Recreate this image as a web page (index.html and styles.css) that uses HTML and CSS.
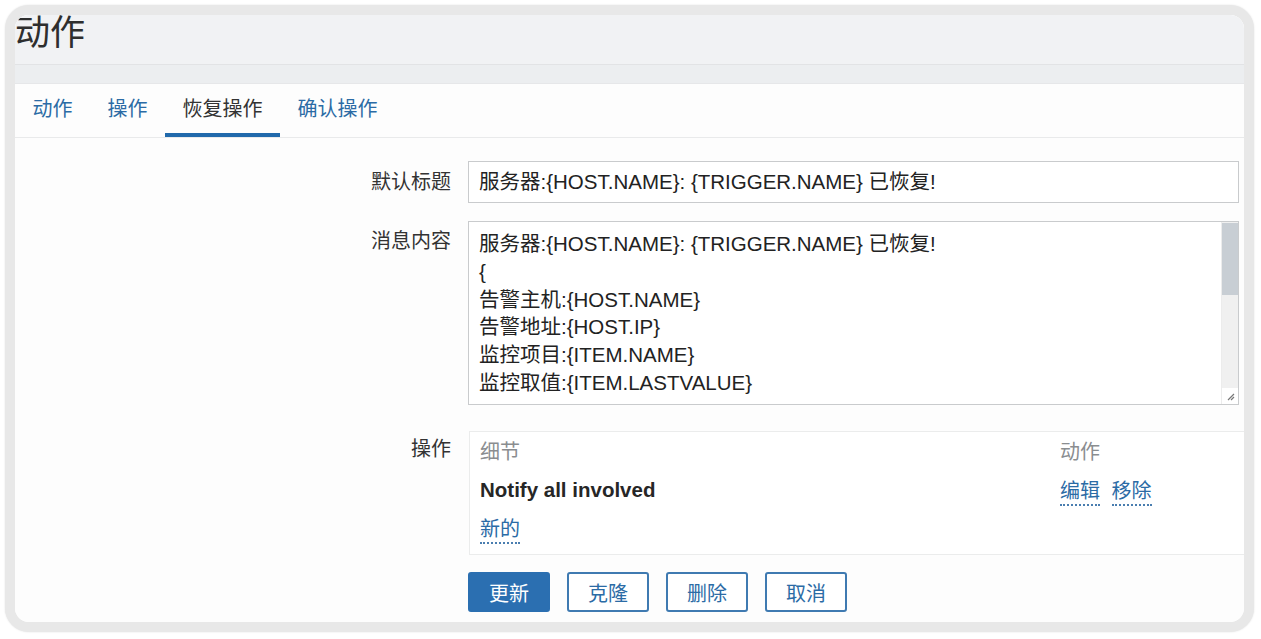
FILE: index.html
```html
<!DOCTYPE html>
<html lang="zh-CN">
<head>
	<meta charset="UTF-8">
	<title>动作</title>
	<link rel="stylesheet" href="styles.css">
</head>
<body>
	<div class="frame">
		<div class="page">
			<div class="header">
				<h1>动作</h1>
			</div>
			<div class="band"></div>

			<ul class="tabs">
				<li><a href="#">动作</a></li>
				<li><a href="#">操作</a></li>
				<li class="active"><a href="#">恢复操作</a></li>
				<li><a href="#">确认操作</a></li>
			</ul>

			<div class="form">
				<div class="label label-mid">默认标题</div>
				<div class="input">服务器:{HOST.NAME}: {TRIGGER.NAME} 已恢复!</div>

				<div class="label label-top">消息内容</div>
				<div class="textarea">
					<div class="lines">
						<div>服务器:{HOST.NAME}: {TRIGGER.NAME} 已恢复!</div>
						<div>{</div>
						<div>告警主机:{HOST.NAME}</div>
						<div>告警地址:{HOST.IP}</div>
						<div>监控项目:{ITEM.NAME}</div>
						<div>监控取值:{ITEM.LASTVALUE}</div>
					</div>
					<div class="scrollbar">
						<div class="thumb"></div>
						<div class="grip">
							<svg width="10" height="10" viewBox="0 0 10 10">
								<path d="M9 3 L3 9 M9 6 L6 9" stroke="#777" stroke-width="1.2" fill="none"/>
							</svg>
						</div>
					</div>
				</div>

				<div class="label label-ops">操作</div>
				<div class="ops">
					<div class="ops-row ops-head">
						<span class="col-detail">细节</span>
						<span class="col-action">动作</span>
					</div>
					<div class="ops-row">
						<span class="col-detail bold">Notify all involved</span>
						<span class="col-action">
							<a href="#" class="link">编辑</a>
							<a href="#" class="link">移除</a>
						</span>
					</div>
					<div class="ops-row">
						<span class="col-detail"><a href="#" class="link">新的</a></span>
					</div>
				</div>

				<div></div>
				<div class="buttons">
					<button class="btn primary">更新</button>
					<button class="btn">克隆</button>
					<button class="btn">删除</button>
					<button class="btn">取消</button>
				</div>
			</div>
		</div>
	</div>
</body>
</html>
```

FILE: styles.css
```css
*{
	margin:0;
	padding:0;
	box-sizing:border-box;
}
body{
	background:#fff;
	font-family:"Liberation Sans","Noto Sans CJK SC",sans-serif;
	color:#333;
}
.frame{
	margin:5px;
	width:1249px;
	height:627px;
	border:10px solid #e8e8e8;
	border-radius:24px;
	box-shadow:0 0 2px #e0e0e0;
	overflow:hidden;
	background:#fdfdfd;
}
.page{
	height:100%;
	background:#fdfdfd;
}
.header{
	height:50px;
	background:#f1f2f4;
	border-bottom:1px solid #e2e3e5;
}
h1{
	font-size:35px;
	font-weight:normal;
	line-height:36px;
	color:#2e2e2e;
}
.band{
	height:19px;
	background:#eceef0;
	border-bottom:1px solid #e6e7e9;
}
.tabs{
	list-style:none;
	display:flex;
	height:54px;
	border-bottom:1px solid #e9eaeb;
	background:#fdfdfd;
}
.tabs li{
	padding:0 17.5px;
	border-bottom:4px solid transparent;
}
.tabs li a{
	display:block;
	line-height:51px;
	font-size:20px;
	color:#2b6ba5;
	text-decoration:none;
}
.tabs li.active{
	border-bottom-color:#2169ab;
}
.tabs li.active a{
	color:#333;
}
.form{
	display:grid;
	grid-template-columns:436px 1fr;
	column-gap:17px;
	padding-top:23px;
}
.label{
	text-align:right;
	font-size:20px;
	color:#333;
}
.label-mid{
	line-height:42px;
}
.label-top{
	margin-top:18px;
	padding-top:6px;
	line-height:28px;
}
.label-ops{
	margin-top:26px;
	padding-top:4px;
	line-height:28px;
}
.input{
	width:771px;
	height:42px;
	border:1px solid #c9cbcd;
	background:#fff;
	padding-left:10px;
	line-height:40px;
	font-size:20.5px;
	color:#222;
}
.textarea{
	margin-top:18px;
	width:771px;
	height:184px;
	border:1px solid #c9cbcd;
	background:#fff;
	display:flex;
}
.lines{
	flex:1;
	overflow:hidden;
	padding:8px 0 0 10px;
	font-size:20.5px;
	line-height:27.8px;
	color:#222;
}
.scrollbar{
	width:17px;
	background:#f0f0f0;
	border-left:1px solid #ececec;
	display:flex;
	flex-direction:column;
	padding-top:1px;
}
.thumb{
	height:72px;
	background:#c8ced4;
}
.grip{
	margin-top:auto;
	height:16px;
	background:#fff;
	display:flex;
	align-items:center;
	justify-content:center;
}
.ops{
	margin-top:26px;
	margin-left:1px;
	height:124px;
	border:1px solid #ebecec;
	border-right:none;
	background:#fff;
	padding:1px 0 0 10px;
}
.ops-row{
	display:flex;
	height:38px;
	line-height:38px;
	font-size:20px;
}
.ops-head{
	color:#8a8d90;
}
.col-detail{
	width:580px;
}
.col-action .link{
	margin-right:6px;
}
.bold{
	font-weight:bold;
	font-size:20.5px;
	color:#262626;
}
.link{
	color:#2b6ba5;
	text-decoration:none;
	border-bottom:2px dotted #4a7eb0;
	line-height:26px;
	display:inline-block;
	vertical-align:middle;
}
.buttons{
	display:flex;
	gap:17px;
	margin-top:17px;
}
.btn{
	width:82px;
	height:40px;
	border:2px solid #3f7ab1;
	border-radius:3px;
	background:#fff;
	color:#2b6ba5;
	font-size:20px;
	font-family:"Liberation Sans","Noto Sans CJK SC",sans-serif;
}
.btn.primary{
	background:#2b6fb1;
	border-color:#2b6fb1;
	color:#fff;
}
```
